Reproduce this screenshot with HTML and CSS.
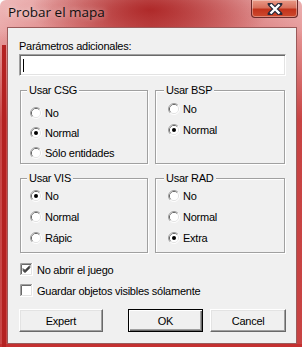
FILE: index.html
```html
<!DOCTYPE html>
<html lang="es">
<head>
    <meta charset="UTF-8">
    <title>Probar el mapa</title>
    <link rel="stylesheet" href="styles.css">
</head>
<body>
    <svg class="defs" width="0" height="0">
        <symbol id="radio" viewBox="0 0 12 12">
            <path d="M2.11 9.89 A5.5 5.5 0 0 1 9.89 2.11" fill="none" stroke="#a0a0a0"/>
            <path d="M9.89 2.11 A5.5 5.5 0 0 1 2.11 9.89" fill="none" stroke="#ffffff"/>
            <path d="M2.82 9.18 A4.5 4.5 0 0 1 9.18 2.82" fill="none" stroke="#696969"/>
            <path d="M9.18 2.82 A4.5 4.5 0 0 1 2.82 9.18" fill="none" stroke="#e3e3e3"/>
            <circle cx="6" cy="6" r="4" fill="#ffffff"/>
        </symbol>
        <symbol id="radio-on" viewBox="0 0 12 12">
            <use href="#radio"/>
            <circle cx="6" cy="6" r="2" fill="#000000"/>
        </symbol>
    </svg>

    <div class="window">
        <div class="titlebar">
            <span class="title">Probar el mapa</span>
            <div class="close">
                <svg width="16" height="12" viewBox="0 0 16 12">
                    <path d="M3 1 L13 11 M13 1 L3 11" stroke="#2a2a3a" stroke-width="4.6" stroke-linecap="round"/>
                    <path d="M3.5 1.5 L12.5 10.5 M12.5 1.5 L3.5 10.5" stroke="#ffffff" stroke-width="2.4"/>
                </svg>
            </div>
        </div>

        <div class="client">
            <div class="field-label">Parámetros adicionales:</div>
            <div class="edit"><span class="caret"></span></div>

            <div class="groups">
                <div class="group group-csg">
                    <span class="legend">Usar CSG</span>
                    <div class="radio"><svg><use href="#radio"/></svg>No</div>
                    <div class="radio"><svg><use href="#radio-on"/></svg>Normal</div>
                    <div class="radio"><svg><use href="#radio"/></svg>Sólo entidades</div>
                </div>
                <div class="group group-bsp">
                    <span class="legend">Usar BSP</span>
                    <div class="radio"><svg><use href="#radio"/></svg>No</div>
                    <div class="radio"><svg><use href="#radio-on"/></svg>Normal</div>
                </div>
                <div class="group group-vis">
                    <span class="legend">Usar VIS</span>
                    <div class="radio"><svg><use href="#radio-on"/></svg>No</div>
                    <div class="radio"><svg><use href="#radio"/></svg>Normal</div>
                    <div class="radio"><svg><use href="#radio"/></svg>Rápic</div>
                </div>
                <div class="group group-rad">
                    <span class="legend">Usar RAD</span>
                    <div class="radio"><svg><use href="#radio"/></svg>No</div>
                    <div class="radio"><svg><use href="#radio"/></svg>Normal</div>
                    <div class="radio"><svg><use href="#radio-on"/></svg>Extra</div>
                </div>
            </div>

            <div class="checks">
                <div class="check">
                    <svg width="13" height="13" viewBox="0 0 13 13">
                        <rect x="0" y="0" width="13" height="13" fill="#ffffff"/>
                        <path d="M0.5 12 V0.5 H12" fill="none" stroke="#a0a0a0"/>
                        <path d="M1.5 11 V1.5 H11" fill="none" stroke="#696969"/>
                        <path d="M1 11.5 H11.5 V1" fill="none" stroke="#e3e3e3"/>
                        <path d="M3 5.5 L5 7.5 L10 2.5 M3 6.5 L5 8.5 L10 3.5 M3 7.5 L5 9.5 L10 4.5" fill="none" stroke="#000000"/>
                    </svg>
                    No abrir el juego
                </div>
                <div class="check">
                    <svg width="13" height="13" viewBox="0 0 13 13">
                        <rect x="0" y="0" width="13" height="13" fill="#ffffff"/>
                        <path d="M0.5 12 V0.5 H12" fill="none" stroke="#a0a0a0"/>
                        <path d="M1.5 11 V1.5 H11" fill="none" stroke="#696969"/>
                        <path d="M1 11.5 H11.5 V1" fill="none" stroke="#e3e3e3"/>
                    </svg>
                    Guardar objetos visibles sólamente
                </div>
            </div>

            <div class="buttons">
                <div class="btn btn-expert">Expert</div>
                <div class="btn btn-ok">OK</div>
                <div class="btn btn-cancel">Cancel</div>
            </div>
        </div>
    </div>
</body>
</html>
```

FILE: styles.css
```css
/* Base */
body, html {
    margin: 0;
    padding: 0;
    background: #ffffff;
}

.defs {
    position: absolute;
}

/* Window frame */
.window {
    width: 302px;
    height: 347px;
    box-sizing: border-box;
    padding: 0 5px 3px 7px;
    border-radius: 6px 6px 0 0;
    background:
        linear-gradient(#b42222, #b42222) 2px 45px / 4px 302px no-repeat,
        linear-gradient(#c43030, #c43030) 0 344px / 302px 3px no-repeat,
        radial-gradient(ellipse 120px 40px at 150px 10px, rgba(170, 30, 30, 0.85), rgba(170, 30, 30, 0) 100%),
        linear-gradient(to bottom, rgba(190, 40, 40, 0) 30px, rgba(190, 40, 40, 0.75) 120px),
        linear-gradient(to bottom, rgba(255, 255, 255, 0.25), rgba(255, 255, 255, 0) 40px),
        linear-gradient(to right, #e9a3a3 0%, #d97a7a 25%, #c04848 50%, #d46e6e 75%, #e59696 100%);
    display: flex;
    flex-direction: column;
    font-family: "Liberation Sans", Arial, sans-serif;
    font-size: 11px;
    letter-spacing: -0.25px;
    color: #000000;
}

.titlebar {
    height: 27px;
    display: flex;
    align-items: flex-start;
    justify-content: space-between;
    flex-shrink: 0;
}

.title {
    font-family: "Open Sans", "Noto Sans", sans-serif;
    font-size: 13.5px;
    letter-spacing: 0;
    margin: 3px 0 0 1px;
    color: #101010;
    text-shadow: 0 0 6px rgba(255, 255, 255, 0.7);
}

.close {
    width: 47px;
    height: 18px;
    margin-right: -1px;
    box-sizing: border-box;
    border: 1px solid #6b2a2a;
    border-top: none;
    border-radius: 0 0 4px 4px;
    background: linear-gradient(to bottom, #e99a88 0%, #d8705c 45%, #c2331c 55%, #cf4a2e 100%);
    box-shadow: inset 0 0 0 1px rgba(255, 255, 255, 0.35);
    display: flex;
    align-items: center;
    justify-content: center;
}

/* Client area */
.client {
    flex: 1;
    background: #f0f0f0;
    border: 1px solid #9a5a5a;
    padding: 0 10px 0 11px;
    display: flex;
    flex-direction: column;
}

.field-label {
    margin-top: 12px;
    line-height: 13px;
}

.edit {
    margin-top: 1px;
    width: 267px;
    height: 22px;
    box-sizing: border-box;
    background: #ffffff;
    border: 1px solid;
    border-color: #a0a0a0 #ffffff #ffffff #a0a0a0;
    box-shadow: inset 1px 1px #696969, inset -1px -1px #e3e3e3;
    padding: 4px 0 0 3px;
}

.caret {
    display: block;
    width: 1px;
    height: 13px;
    background: #000000;
}

/* Group boxes */
.groups {
    margin-top: 14px;
    display: grid;
    grid-template-columns: 128px 130px;
    grid-template-rows: 74px 75px;
    column-gap: 7px;
    row-gap: 14px;
    margin-left: 1px;
}

.group {
    position: relative;
    border: 1px solid #a0a0a0;
    box-shadow: inset 1px 1px #ffffff, 1px 1px #ffffff;
    display: flex;
    flex-direction: column;
    padding: 12px 0 0 9px;
}

.legend {
    position: absolute;
    top: -7px;
    left: 6px;
    padding: 0 2px;
    line-height: 13px;
    background: #f0f0f0;
}

.group-bsp,
.group-rad {
    padding-left: 12px;
}

.group-bsp .legend,
.group-rad .legend {
    left: 8px;
}

.group-bsp {
    padding-top: 7px;
}

.group-vis,
.group-rad {
    padding-top: 6px;
}

.radio {
    display: flex;
    align-items: center;
    height: 20px;
}

.group-bsp .radio,
.group-vis .radio,
.group-rad .radio {
    height: 21px;
}

.radio svg {
    width: 12px;
    height: 12px;
    margin-right: 3px;
}

/* Checkboxes */
.checks {
    margin-top: 10px;
    margin-left: 1px;
    display: flex;
    flex-direction: column;
    gap: 8px;
}

.check {
    display: flex;
    align-items: center;
    height: 13px;
}

.check svg {
    margin-right: 4px;
}

/* Buttons */
.buttons {
    margin-top: 12px;
    display: flex;
}

.btn {
    height: 23px;
    box-sizing: border-box;
    background: #f0f0f0;
    border: 1px solid;
    border-color: #ffffff #696969 #696969 #ffffff;
    box-shadow: inset -1px -1px #a0a0a0, inset 1px 1px #e3e3e3;
    display: flex;
    align-items: center;
    justify-content: center;
}

.btn-expert {
    width: 84px;
}

.btn-ok {
    width: 76px;
    margin-left: 25px;
    border-color: #000000;
    box-shadow: inset 1px 1px #ffffff, inset -1px -1px #696969, inset -2px -2px #a0a0a0;
}

.btn-cancel {
    width: 76px;
    margin-left: 7px;
}
```
